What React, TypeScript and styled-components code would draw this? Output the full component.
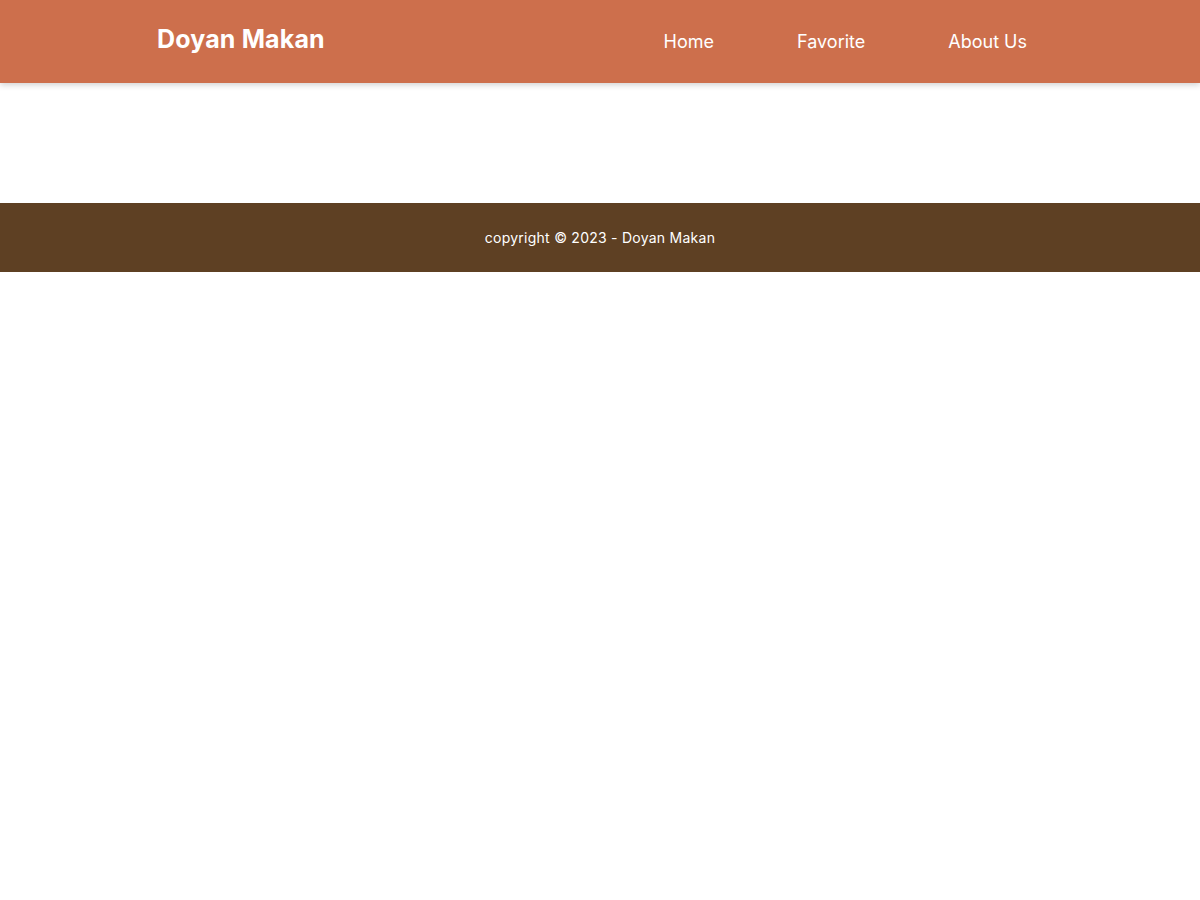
import styled, { createGlobalStyle } from 'styled-components';

const GlobalStyle = createGlobalStyle`
  * {
    box-sizing: border-box;
  }

  body {
    margin: 0;
    font-family: Inter, 'Noto Sans', sans-serif;
    background: #fff;
  }
`;

const links = ['Home', 'Favorite', 'About Us'];

const App = () => {
  return (
    <>
      <GlobalStyle />
      <Header>
        <Logo>Doyan Makan</Logo>
        <Nav>
          {links.map((link) => (
            <NavLink key={link} href="#">
              {link}
            </NavLink>
          ))}
        </Nav>
      </Header>
      <Main />
      <Footer>
        <Copyright>copyright © 2023 - Doyan Makan</Copyright>
      </Footer>
    </>
  );
};

export default App;

const Header = styled.header`
  height: 83px;
  display: flex;
  align-items: center;
  justify-content: space-between;
  padding: 0 173px 0 157px;
  background-color: #cd6f4c;
  box-shadow: 0 2px 6px rgba(0, 0, 0, 0.18);
  position: relative;
`;

const Logo = styled.h1`
  margin: 0 0 6px;
  font-size: 25px;
  font-weight: 700;
  letter-spacing: 0.15px;
  color: #fff;
`;

const Nav = styled.nav`
  display: flex;
  align-items: center;
  gap: 83px;
`;

const NavLink = styled.a`
  color: #fff;
  text-decoration: none;
  font-size: 18px;
  font-weight: 400;
  letter-spacing: 0;
`;

const Main = styled.main`
  height: 120px;
`;

const Footer = styled.footer`
  height: 69px;
  display: flex;
  align-items: center;
  justify-content: center;
  background-color: #5e4023;
`;

const Copyright = styled.p`
  margin: 0;
  font-size: 14px;
  letter-spacing: 0.25px;
  color: #fff;
`;
